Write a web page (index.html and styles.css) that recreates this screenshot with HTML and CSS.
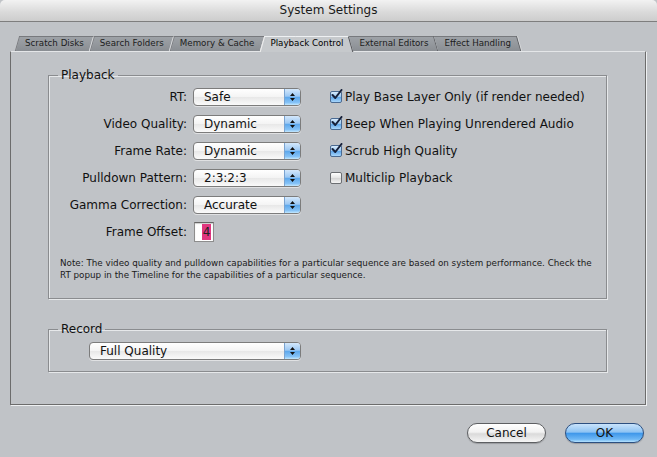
FILE: index.html
```html
<!DOCTYPE html>
<html>
<head>
<meta charset="utf-8">
<title>System Settings</title>
<link rel="stylesheet" href="styles.css">
</head>
<body>
<div class="window">
  <header class="titlebar">System Settings</header>
  <main class="content">
    <nav class="tabs">
      <span class="tab tab-left">Scratch Disks</span>
      <span class="tab tab-left">Search Folders</span>
      <span class="tab tab-left">Memory &amp; Cache</span>
      <span class="tab tab-active">Playback Control</span>
      <span class="tab tab-right">External Editors</span>
      <span class="tab tab-right">Effect Handling</span>
    </nav>
    <section class="pane">
      <fieldset class="group group-playback">
        <legend>Playback</legend>
        <div class="playback-body">
          <div class="form-grid">
            <span class="lbl">RT:</span>
            <div class="popup"><span class="popup-text">Safe</span><span class="popup-arrows"><svg width="15" height="16" viewBox="0 0 15 16"><path d="M5 7 L7.5 4 L10 7 Z M5 9 L7.5 12 L10 9 Z" fill="#111"/></svg></span></div>
            <span class="lbl">Video Quality:</span>
            <div class="popup"><span class="popup-text">Dynamic</span><span class="popup-arrows"><svg width="15" height="16" viewBox="0 0 15 16"><path d="M5 7 L7.5 4 L10 7 Z M5 9 L7.5 12 L10 9 Z" fill="#111"/></svg></span></div>
            <span class="lbl">Frame Rate:</span>
            <div class="popup"><span class="popup-text">Dynamic</span><span class="popup-arrows"><svg width="15" height="16" viewBox="0 0 15 16"><path d="M5 7 L7.5 4 L10 7 Z M5 9 L7.5 12 L10 9 Z" fill="#111"/></svg></span></div>
            <span class="lbl">Pulldown Pattern:</span>
            <div class="popup"><span class="popup-text">2:3:2:3</span><span class="popup-arrows"><svg width="15" height="16" viewBox="0 0 15 16"><path d="M5 7 L7.5 4 L10 7 Z M5 9 L7.5 12 L10 9 Z" fill="#111"/></svg></span></div>
            <span class="lbl">Gamma Correction:</span>
            <div class="popup"><span class="popup-text">Accurate</span><span class="popup-arrows"><svg width="15" height="16" viewBox="0 0 15 16"><path d="M5 7 L7.5 4 L10 7 Z M5 9 L7.5 12 L10 9 Z" fill="#111"/></svg></span></div>
            <span class="lbl">Frame Offset:</span>
            <div class="field"><span class="sel">4</span></div>
          </div>
          <div class="checks">
            <div class="check"><span class="box box-on"><svg width="13" height="13" viewBox="0 0 13 13"><path d="M2.5 6 L5.3 9 L11.5 1" fill="none" stroke="#16203a" stroke-width="2" stroke-linecap="round" stroke-linejoin="round"/></svg></span><span>Play Base Layer Only (if render needed)</span></div>
            <div class="check"><span class="box box-on"><svg width="13" height="13" viewBox="0 0 13 13"><path d="M2.5 6 L5.3 9 L11.5 1" fill="none" stroke="#16203a" stroke-width="2" stroke-linecap="round" stroke-linejoin="round"/></svg></span><span>Beep When Playing Unrendered Audio</span></div>
            <div class="check"><span class="box box-on"><svg width="13" height="13" viewBox="0 0 13 13"><path d="M2.5 6 L5.3 9 L11.5 1" fill="none" stroke="#16203a" stroke-width="2" stroke-linecap="round" stroke-linejoin="round"/></svg></span><span>Scrub High Quality</span></div>
            <div class="check"><span class="box"></span><span>Multiclip Playback</span></div>
          </div>
        </div>
        <p class="note">Note: The video quality and pulldown capabilities for a particular sequence are based on system performance. Check the<br>RT popup in the Timeline for the capabilities of a particular sequence.</p>
      </fieldset>
      <fieldset class="group group-record">
        <legend>Record</legend>
        <div class="popup popup-wide"><span class="popup-text">Full Quality</span><span class="popup-arrows"><svg width="15" height="16" viewBox="0 0 15 16"><path d="M5 7 L7.5 4 L10 7 Z M5 9 L7.5 12 L10 9 Z" fill="#111"/></svg></span></div>
      </fieldset>
    </section>
    <div class="buttons">
      <button class="btn">Cancel</button>
      <button class="btn btn-default">OK</button>
    </div>
  </main>
</div>
</body>
</html>
```
FILE: styles.css
```css
* { box-sizing: border-box; }
html, body { margin: 0; padding: 0; }
body {
  width: 657px;
  height: 457px;
  overflow: hidden;
  background: #c0c3c7;
  font-family: "DejaVu Sans", "Liberation Sans", sans-serif;
  font-size: 12px;
  color: #111;
}
.window { display: flex; flex-direction: column; height: 457px; }
.titlebar {
  height: 22px;
  line-height: 21px;
  text-align: center;
  font-size: 12px;
  color: #1a1a1a;
  background: linear-gradient(#f2f2f2, #d9d9d9 60%, #cdcdcd);
  border-bottom: 1px solid #7e7e7e;
  border-radius: 5px 5px 0 0;
}
.content { display: flex; flex-direction: column; padding: 14px 11px 0 10px; }

/* tabs */
.tabs { display: flex; height: 15px; padding-left: 7px; }
.tab {
  position: relative;
  z-index: 0;
  height: 15px;
  line-height: 15px;
  padding: 0 8px;
  font-size: 8.7px;
  color: #1c1c1c;
  white-space: nowrap;
}
.tab-left::before, .tab-right::before {
  content: "";
  position: absolute;
  inset: 0;
  z-index: -1;
  background: linear-gradient(#9ea2a7, #8a8e93);
  border-top: 1px solid #77797d;
}
.tab-left::before { transform: skewX(-16deg); border-right: 1px solid #d6d8da; border-left: 1px solid #7a7c80; }
.tab-right::before { transform: skewX(16deg); border-right: 1px solid #5f6165; box-shadow: 1px 0 0 #d6d8da; }
.tab-active { z-index: 2; color: #000; }
.tab-active::before, .tab-active::after {
  content: "";
  position: absolute;
  top: 0; bottom: -1px;
  z-index: -1;
  background: #c6c9cc;
  border-top: 1px solid #eef0f2;
}
.tab-active::before { left: 0; right: 40%; transform: skewX(-16deg); border-left: 1px solid #f0f0f0; }
.tab-active::after { left: 40%; right: 0; transform: skewX(16deg); border-right: 1px solid #55575b; }

/* pane */
.pane {
  height: 354px;
  border: 1px solid #6c6c6c;
  border-top-color: #e4e6e8;
  box-shadow: 1px 1px 0 #eef0f2;
  padding: 16px 0 0 37px;
}
.group {
  margin: 0;
  width: 559px;
  border: 1px solid #8a8c8f;
  box-shadow: inset 1px 1px 0 #e6e8ea, 1px 1px 0 #e6e8ea;
  padding: 0;
}
.group legend {
  margin-left: 9px;
  padding: 0 3px;
  font-size: 12px;
  line-height: 15px;
  color: #111;
}
.playback-body { display: flex; padding-top: 5px; }
.form-grid {
  display: grid;
  grid-template-columns: 138px 108px;
  grid-auto-rows: 18px;
  column-gap: 6px;
  row-gap: 9px;
  align-items: center;
}
.lbl { text-align: right; white-space: nowrap; }
.popup {
  display: flex;
  height: 18px;
  border: 1px solid #7c7c7c;
  border-radius: 4px;
  background: linear-gradient(#ffffff, #f4f4f4 48%, #e8e8e8 52%, #fafafa);
  box-shadow: 0 1px 0 rgba(255,255,255,.5);
  overflow: hidden;
}
.popup-text { flex: 1; padding-left: 10px; line-height: 16px; white-space: nowrap; }
.popup-arrows {
  width: 16px;
  display: flex;
  align-items: center;
  justify-content: center;
  border-left: 1px solid #7aa3d0;
  background: linear-gradient(#d4e8fc, #9cc8f3 45%, #5ea8ec 52%, #86c3f7 85%, #c4e8fe);
}
.popup-arrows svg { display: block; }
.field {
  width: 20px;
  height: 20px;
  margin-left: 1px;
  border: 1px solid #8d8d8d;
  border-top-color: #666;
  background: #fff;
  box-shadow: inset 0 1px 1px rgba(0,0,0,.2);
  display: flex;
  justify-content: flex-end;
  padding: 1px 2px 1px 0;
}
.sel { background: #e0367f; width: 9px; line-height: 16px; text-align: center; color: #222; }
.checks {
  display: flex;
  flex-direction: column;
  gap: 9px;
  margin-left: 29px;
}
.check { height: 18px; display: flex; align-items: center; gap: 3px; white-space: nowrap; }
.box {
  position: relative;
  width: 12px;
  height: 12px;
  border: 1px solid #6b6e72;
  border-radius: 2px;
  background: linear-gradient(#ffffff, #e4e4e4 50%, #d6d6d6 55%, #f4f4f4);
}
.box-on { background: linear-gradient(#d8ebfc, #96c6f2 50%, #62a8ea 55%, #a8d6fb); border-color: #4a6a92; }
.box svg { position: absolute; left: -1px; top: -3px; }
.note {
  margin: 16px 0 17px 11px;
  font-size: 8.75px;
  line-height: 12px;
  color: #1a1a1a;
  white-space: nowrap;
}
.group-record { margin-top: 23px; padding: 5px 0 11px 0; }
.popup-wide { width: 212px; margin-left: 40px; }

/* buttons */
.buttons { display: flex; justify-content: flex-end; gap: 19px; margin-top: 18px; padding-right: 2px; }
.btn {
  width: 79px;
  height: 20px;
  border-radius: 10px;
  border: 1px solid #5d5f62;
  font-family: inherit;
  font-size: 12px;
  color: #111;
  padding: 0;
  background: linear-gradient(#ffffff, #f2f2f2 45%, #dadada 55%, #f6f6f6);
  box-shadow: 0 1px 1px rgba(0,0,0,.2);
}
.btn-default {
  border-color: #2c4f80;
  background: linear-gradient(#c9e3fb, #8ec3f3 45%, #3f97ea 52%, #6fb8f5 85%, #b6e2fd);
}
```
